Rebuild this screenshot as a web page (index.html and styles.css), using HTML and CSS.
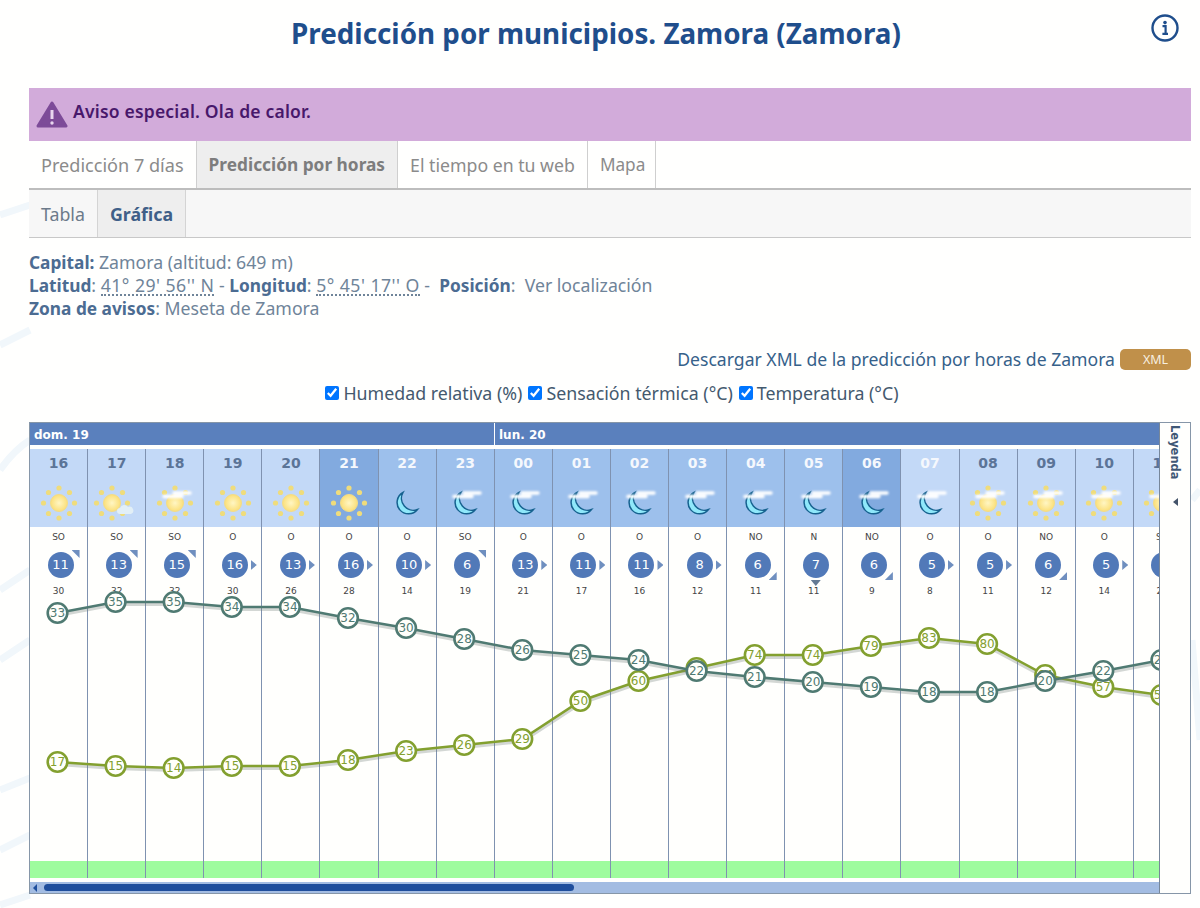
FILE: index.html
```html
<!DOCTYPE html>
<html>
    <head>
        <title>Predicción por municipios. Zamora (Zamora)</title>
        <meta charset="utf-8">
        <link rel="stylesheet" href="styles.css">
    </head>
    <body>
        <svg class="backdrop" viewBox="0 0 1200 908">
            <path d="M0 215 L30 205 M0 345 L30 330 M0 470 Q14 450 30 440 M0 590 L30 570 M0 660 L30 640 M0 790 L30 778 M0 850 L30 835 M0 905 L30 895" />
            <path d="M1192 500 L1200 490 M1192 640 Q1196 690 1200 740" />
        </svg>

        <svg class="icon-defs" width="0" height="0">
            <defs>
                <radialGradient id="sun-disc">
                    <stop offset="0" stop-color="#fff6c4" />
                    <stop offset="1" stop-color="#fbdf78" />
                </radialGradient>
                <filter id="soft" x="-30%" y="-100%" width="160%" height="300%">
                    <feGaussianBlur stdDeviation="0.8" />
                </filter>
                <symbol id="sun" viewBox="-20 -20 40 40" overflow="visible">
                    <g fill="#efdc7c">
                        <circle cx="0" cy="-15" r="2.6" />
                        <circle cx="0" cy="15" r="2.6" />
                        <circle cx="-15.5" cy="0" r="2.6" />
                        <circle cx="15.5" cy="0" r="2.6" />
                        <circle cx="-10.5" cy="-10.5" r="2.6" />
                        <circle cx="10.5" cy="-10.5" r="2.6" />
                        <circle cx="-10.5" cy="10.5" r="2.6" />
                        <circle cx="10.5" cy="10.5" r="2.6" />
                    </g>
                    <circle r="8.5" fill="url(#sun-disc)" stroke="#f4dc86" />
                </symbol>
                <symbol id="moon" viewBox="-20 -20 40 40" overflow="visible">
                    <path d="M-4 -10.5 A11.4 11.4 0 1 0 10.5 6.5 A11.9 11.9 0 0 1 -4 -10.5 Z" fill="#8fe8fa" stroke="#16628f" stroke-width="1.5" />
                </symbol>
                <symbol id="haze" viewBox="-20 -20 40 40" overflow="visible">
                    <g filter="url(#soft)" stroke="#fff" stroke-linecap="round" stroke-width="3.4">
                        <path d="M-1 -10 H15" />
                        <path d="M-11 -6.5 H7" />
                    </g>
                </symbol>
                <symbol id="cloud" viewBox="-20 -20 40 40" overflow="visible">
                    <path d="M8 11 A3 3 0 0 1 8 5 A4.5 4.5 0 0 1 16 4 A3.5 3.5 0 0 1 19 11 Z" fill="#e2eff6" />
                </symbol>
            </defs>
        </svg>

        <div class="page">
            <div class="page-head">
                <h1 class="title">Predicción por municipios. Zamora (Zamora)</h1>
                <svg class="info-icon" width="30" height="30" viewBox="0 0 30 30">
                    <circle cx="15" cy="15" r="12.5" fill="none" stroke="#1f4e8c" stroke-width="2.4" />
                    <circle cx="15" cy="9.6" r="1.8" fill="#1f4e8c" />
                    <path d="M12.5 13.2 H15.6 V20.4 M12.4 20.8 H18" fill="none" stroke="#1f4e8c" stroke-width="2.2" />
                </svg>
            </div>

            <div class="alert">
                <svg class="alert-icon" width="32" height="28" viewBox="0 0 32 28">
                    <path d="M16 2 L30 25 H2 Z" fill="#7d4b98" stroke="#7d4b98" stroke-width="3" stroke-linejoin="round" />
                    <path d="M16 9 V18" stroke="#e8d6ee" stroke-width="3" />
                    <circle cx="16" cy="22" r="1.7" fill="#e8d6ee" />
                </svg>
                <span>Aviso especial. Ola de calor.</span>
            </div>

            <div class="tabs">
                <a class="tab tab-first">Predicción 7 días</a>
                <a class="tab tab-active">Predicción por horas</a>
                <a class="tab">El tiempo en tu web</a>
                <a class="tab">Mapa</a>
            </div>

            <div class="subtabs">
                <a class="subtab">Tabla</a>
                <a class="subtab subtab-active">Gráfica</a>
            </div>

            <div class="info">
                <p><b>Capital:</b> Zamora (altitud: 649 m)</p>
                <p><b>Latitud</b>: <span class="coord">41° 29' 56'' N</span> - <b>Longitud</b>: <span class="coord">5° 45' 17'' O</span> -&nbsp; <b>Posición</b>: &nbsp;Ver localización</p>
                <p><b>Zona de avisos</b>: Meseta de Zamora</p>
            </div>

            <div class="download">
                <a class="download-link">Descargar XML de la predicción por horas de Zamora</a>
                <a class="xml-button">XML</a>
            </div>

            <div class="checks">
                <label><input type="checkbox" checked>Humedad relativa (%)</label>
                <label><input type="checkbox" checked>Sensación térmica (°C)</label>
                <label><input type="checkbox" checked>Temperatura (°C)</label>
            </div>

            <div class="chart">
                <div class="chart-main">
                    <div class="days">
                        <div class="day day-first">dom. 19</div>
                        <div class="day">lun. 20</div>
                    </div>
                    <div class="hours"></div>
                    <div class="scrollbar">
                        <span class="scroll-arrow"></span>
                        <span class="scroll-thumb"></span>
                    </div>
                </div>
                <div class="legend">
                    <span class="legend-text">Leyenda</span>
                    <span class="legend-arrow"></span>
                </div>
            </div>
        </div>

        <script src="script.js"></script>
    </body>
</html>
```

FILE: styles.css
```css
body{
    margin: 0;
    background-color: #fffffe;
    font-family: "Noto Sans", Arial, sans-serif;
}
.backdrop{
    position: absolute;
    top: 0;
    left: 0;
    width: 1200px;
    height: 908px;
    z-index: -1;
    fill: none;
    stroke: #f1f7fb;
    stroke-width: 7;
}
.icon-defs{
    position: absolute;
}
.page{
    padding: 0 9px 0 29px;
}
.page-head{
    position: relative;
    height: 88px;
}
.title{
    margin: 0;
    padding: 12px 28px 0 0;
    text-align: center;
    font-size: 27.8px;
    line-height: 42px;
    font-weight: bold;
    color: #1f4e8c;
}
.info-icon{
    position: absolute;
    top: 13px;
    right: 11px;
}
.alert{
    display: flex;
    align-items: center;
    gap: 5px;
    height: 53px;
    padding-left: 7px;
    background-color: #d2abda;
    color: #48186b;
    font-size: 17.5px;
    letter-spacing: .2px;
    font-weight: 600;
}
.alert span{
    margin-top: -8px;
}
.tabs{
    display: flex;
    height: 47px;
    border-bottom: 2px solid #bdbdbd;
}
.tab{
    display: flex;
    align-items: center;
    padding: 0 12px;
    border-right: 1px solid #cfcfcf;
    font-size: 17.7px;
    color: #8b8b8b;
}
.tab:last-child{
    padding-right: 10px;
    font-size: 17.2px;
}
.tab-first{
    font-size: 18.1px;
}
.tab-active{
    background-color: #eeeeee;
    font-size: 17.3px;
    font-weight: bold;
    color: #7d7d7d;
}
.subtabs{
    display: flex;
    height: 47px;
    background-color: #f7f7f7;
    border-bottom: 1px solid #c8c8c8;
}
.subtab{
    display: flex;
    align-items: center;
    padding: 0 12px;
    border-right: 1px solid #d4d4d4;
    font-size: 17.8px;
    color: #6c7a8a;
}
.subtab-active{
    background-color: #eeeeee;
    font-weight: bold;
    color: #3f5f88;
}
.info{
    margin-top: 13px;
    font-size: 17.7px;
    line-height: 23px;
    color: #6f8499;
}
.info p{
    margin: 0;
}
.info b{
    font-size: 17.3px;
    color: #4c6c92;
}
.coord{
    border-bottom: 2px dotted #6f8499;
    line-height: 17px;
    letter-spacing: .45px;
    display: inline-block;
}
.download{
    display: flex;
    justify-content: flex-end;
    align-items: center;
    gap: 5px;
    margin-top: 28px;
    height: 22px;
    font-size: 17.6px;
    color: #36618a;
}
.xml-button{
    width: 71px;
    height: 21px;
    line-height: 21px;
    text-align: center;
    border-radius: 5px;
    background-color: #c0904a;
    color: #f7efe0;
    font-size: 12.5px;
}
.checks{
    display: flex;
    justify-content: center;
    gap: 6px;
    margin-top: 11px;
    padding-left: 4px;
    height: 30px;
    font-size: 17.8px;
    line-height: 24px;
    color: #44596e;
}
.checks label{
    display: flex;
    align-items: center;
    height: 24px;
}
.checks input{
    width: 14px;
    height: 14px;
    margin: 0 4px 0 0;
}
.chart{
    display: flex;
    height: 470px;
    margin-top: 11px;
    border: 1px solid #8696a8;
    background-color: #fffffd;
}
.chart-main{
    display: flex;
    flex-direction: column;
    width: 1129px;
    overflow: hidden;
}
.days{
    display: flex;
    height: 22px;
    flex-shrink: 0;
    background-color: #5a80bd;
    color: white;
    font-family: "DejaVu Sans", sans-serif;
    font-size: 12px;
    font-weight: bold;
    line-height: 25px;
}
.day{
    padding-left: 4px;
    border-left: 1px solid white;
}
.day-first{
    width: 460px;
    border-left: none;
}
.hours{
    position: relative;
    display: flex;
    margin-top: 4px;
    height: 429px;
    flex-shrink: 0;
}
.hour{
    display: flex;
    flex-direction: column;
    align-items: center;
    width: 58.1px;
    flex-shrink: 0;
    box-sizing: border-box;
    border-right: 1px solid #7f92b0;
    font-family: "DejaVu Sans", sans-serif;
    color: #444444;
}
.hour-head{
    align-self: stretch;
    height: 78px;
    text-align: center;
    background-color: #c3d9f7;
}
.hour-dusk .hour-head{
    background-color: #82aadf;
}
.hour-night .hour-head{
    background-color: #9dc0ec;
}
.hour-label{
    height: 31px;
    font-size: 14px;
    font-weight: bold;
    line-height: 29px;
    color: #5b7497;
}
.hour-dusk .hour-label,
.hour-night .hour-label,
.hour-white .hour-label{
    color: #f5f8fd;
}
.hour-icon{
    display: block;
    width: 40px;
    height: 40px;
    margin: 3px auto 0;
    overflow: visible;
}
.wind-dir{
    margin-top: 5px;
    font-size: 9px;
    line-height: 11px;
}
.wind-badge{
    position: relative;
    width: 26px;
    height: 26px;
    margin: 9px 0 0 4px;
    line-height: 26px;
    text-align: center;
    border-radius: 50%;
    background-color: #5179b8;
    color: white;
    font-size: 13px;
}
.wind-badge::after{
    content: "";
    position: absolute;
    background-color: #6f8fbf;
}
.arrow-O::after{
    left: 29px;
    top: 8px;
    width: 6px;
    height: 10px;
    clip-path: polygon(0 0, 100% 50%, 0 100%);
}
.arrow-SO::after{
    left: 24px;
    top: -2px;
    width: 8px;
    height: 8px;
    clip-path: polygon(0 0, 100% 0, 100% 100%);
}
.arrow-NO::after{
    left: 24px;
    top: 20px;
    width: 8px;
    height: 8px;
    clip-path: polygon(100% 0, 100% 100%, 0 100%);
}
.arrow-N::after{
    left: 8px;
    top: 28px;
    width: 10px;
    height: 6px;
    clip-path: polygon(0 0, 100% 0, 50% 100%);
    background-color: #647a94;
}
.gust{
    margin-top: 7px;
    font-size: 9px;
    line-height: 12px;
}
.strip{
    align-self: stretch;
    margin-top: auto;
    height: 17px;
    background-color: #9efc9e;
}
.lines{
    position: absolute;
    top: 0;
    left: 0;
    width: 1160px;
    height: 429px;
    overflow: hidden;
    font-family: "DejaVu Sans", sans-serif;
    font-size: 12px;
}
.line-shadow{
    fill: none;
    stroke: #6c7c78;
    stroke-opacity: .3;
    stroke-width: 4;
}
.line{
    fill: none;
    stroke-width: 2.5;
}
.dot{
    fill: #fffffb;
    stroke-width: 2.6;
}
.temp .line,
.temp .dot{
    stroke: #4f7a72;
}
.temp text{
    fill: #4f7a72;
    text-anchor: middle;
}
.hum .line,
.hum .dot{
    stroke: #83a02f;
}
.hum text{
    fill: #83a02f;
    text-anchor: middle;
}
.scrollbar{
    display: flex;
    align-items: center;
    height: 11px;
    margin-top: 4px;
    flex-shrink: 0;
    background-color: #a3bce2;
}
.scroll-arrow{
    width: 0;
    height: 0;
    margin-left: 3px;
    border-style: solid;
    border-width: 4px 4px 4px 0;
    border-color: transparent #1f4e9c transparent transparent;
}
.scroll-thumb{
    width: 530px;
    height: 7px;
    margin-left: 7px;
    border-radius: 4px;
    background-color: #1f4e9c;
}
.legend{
    display: flex;
    flex-direction: column;
    align-items: center;
    width: 31px;
    box-sizing: border-box;
    border-left: 1px solid #77879a;
    background-color: #fffffd;
}
.legend-text{
    writing-mode: vertical-rl;
    margin-top: 2px;
    font-family: "DejaVu Sans", sans-serif;
    font-size: 11.5px;
    font-weight: bold;
    color: #3f5876;
}
.legend-arrow{
    width: 0;
    height: 0;
    margin-top: 18px;
    border-style: solid;
    border-width: 4px 5px 4px 0;
    border-color: transparent #44546a transparent transparent;
}
```

FILE: script.js
```js
const hours = [
    {h:'16', sky:'sun',        dir:'SO', wind:11, gust:30, temp:33, tempY:613, hum:17, humY:762},
    {h:'17', sky:'sun cloud',  dir:'SO', wind:13, gust:32, temp:35, tempY:602, hum:15, humY:766},
    {h:'18', sky:'sun haze',   dir:'SO', wind:15, gust:32, temp:35, tempY:602, hum:14, humY:768},
    {h:'19', sky:'sun',        dir:'O',  wind:16, gust:30, temp:34, tempY:607, hum:15, humY:766},
    {h:'20', sky:'sun',        dir:'O',  wind:13, gust:26, temp:34, tempY:607, hum:15, humY:766},
    {h:'21', sky:'sun',        dir:'O',  wind:16, gust:28, temp:32, tempY:618, hum:18, humY:760, tone:'dusk'},
    {h:'22', sky:'moon',       dir:'O',  wind:10, gust:14, temp:30, tempY:628, hum:23, humY:751, tone:'night'},
    {h:'23', sky:'moon haze',  dir:'SO', wind:6,  gust:19, temp:28, tempY:639, hum:26, humY:745, tone:'night'},
    {h:'00', sky:'moon haze',  dir:'O',  wind:13, gust:21, temp:26, tempY:650, hum:29, humY:739, tone:'night'},
    {h:'01', sky:'moon haze',  dir:'O',  wind:11, gust:17, temp:25, tempY:655, hum:50, humY:701, tone:'night'},
    {h:'02', sky:'moon haze',  dir:'O',  wind:11, gust:16, temp:24, tempY:660, hum:60, humY:681, tone:'night'},
    {h:'03', sky:'moon haze',  dir:'O',  wind:8,  gust:12, temp:22, tempY:671, hum:66, humY:668, tone:'night'},
    {h:'04', sky:'moon haze',  dir:'NO', wind:6,  gust:11, temp:21, tempY:677, hum:74, humY:655, tone:'night'},
    {h:'05', sky:'moon haze',  dir:'N',  wind:7,  gust:11, temp:20, tempY:682, hum:74, humY:655, tone:'night'},
    {h:'06', sky:'moon haze',  dir:'NO', wind:6,  gust:9,  temp:19, tempY:687, hum:79, humY:646, tone:'dusk'},
    {h:'07', sky:'moon haze',  dir:'O',  wind:5,  gust:8,  temp:18, tempY:692, hum:83, humY:638, tone:'white'},
    {h:'08', sky:'sun haze',   dir:'O',  wind:5,  gust:11, temp:18, tempY:692, hum:80, humY:644},
    {h:'09', sky:'sun haze',   dir:'NO', wind:6,  gust:12, temp:20, tempY:681, hum:64, humY:675},
    {h:'10', sky:'sun haze',   dir:'O',  wind:5,  gust:14, temp:22, tempY:671, hum:57, humY:687},
    {h:'11', sky:'sun haze',   dir:'SO', wind:6,  gust:22, temp:24, tempY:660, hum:55, humY:695}
]

const COL = 58.1
const TOP = 449

function skyIcon(sky){
    const uses = sky.split(' ').map(function(name){
        return `<use href="#${name}" x="-20" y="-20" width="40" height="40"/>`
    }).join('')
    const shift = sky === 'sun cloud' ? '<g transform="translate(-5 0)">' : '<g>'
    return `<svg class="hour-icon" viewBox="-20 -20 40 40">${shift}${uses}</g></svg>`
}

function hourColumn(hour){
    const tone = hour.tone ? `hour-${hour.tone}` : ''
    return `<div class="hour ${tone}">
        <div class="hour-head">
            <div class="hour-label">${hour.h}</div>
            ${skyIcon(hour.sky)}
        </div>
        <div class="wind-dir">${hour.dir}</div>
        <div class="wind-badge arrow-${hour.dir}">${hour.wind}</div>
        <div class="gust">${hour.gust}</div>
        <div class="strip"></div>
    </div>`
}

function series(name, valueKey, yKey){
    const points = hours.map(function(hour, i){
        return [27.5 + i * COL, hour[yKey] - TOP]
    })
    const d = points.map(function(p){ return p.join(' ') }).join(' L')
    const dots = points.map(function(p, i){
        return `<circle class="dot" cx="${p[0]}" cy="${p[1]}" r="9.8"/>
            <text x="${p[0]}" y="${p[1] + 4}">${hours[i][valueKey]}</text>`
    }).join('')
    return `<g class="${name}">
        <path class="line-shadow" d="M${d}" transform="translate(0 2)"/>
        <path class="line" d="M${d}"/>
        ${dots}
    </g>`
}

document.querySelector('.hours').innerHTML = hours.map(hourColumn).join('') +
    `<svg class="lines">${series('hum', 'hum', 'humY')}${series('temp', 'temp', 'tempY')}</svg>`
```
